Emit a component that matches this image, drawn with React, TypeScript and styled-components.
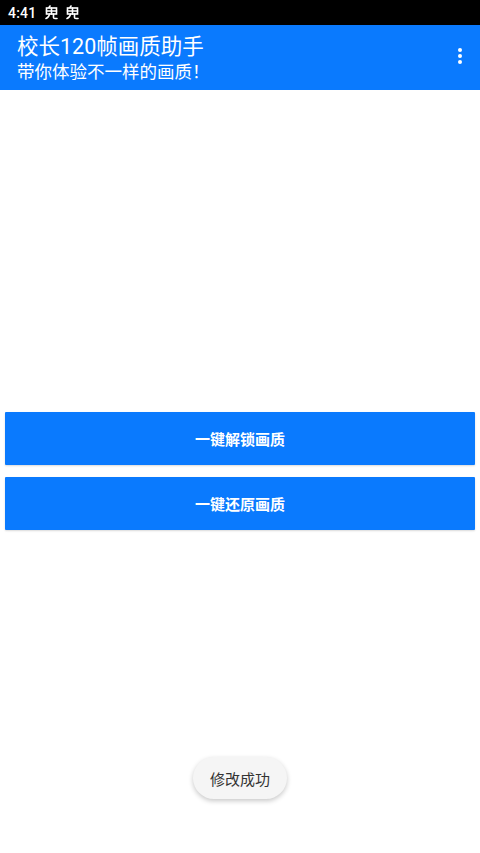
import { FC } from 'react';
import styled, { createGlobalStyle } from 'styled-components';

const GlobalStyle = createGlobalStyle`
  html, body {
    margin: 0;
    padding: 0;
    background: #ffffff;
  }
  body {
    font-family: Roboto, 'Noto Sans CJK SC', sans-serif;
  }
`;

const Screen = styled.div`
  position: relative;
  display: flex;
  flex-direction: column;
  width: 480px;
  height: 853px;
  overflow: hidden;
  background: #ffffff;
`;

const StatusBar = styled.div`
  display: flex;
  align-items: center;
  gap: 8px;
  height: 25px;
  padding: 0 8px;
  background: #000000;
  color: #ffffff;
  font-size: 14px;
  font-weight: 500;
`;

const StatusTime = styled.span`
  margin-right: 1px;
  letter-spacing: 0.2px;
`;

const AppBar = styled.header`
  display: flex;
  align-items: center;
  justify-content: space-between;
  height: 65px;
  padding: 0 16px 0 17px;
  background: #0a7afe;
  color: #ffffff;
`;

const TitleBlock = styled.div`
  display: flex;
  flex-direction: column;
  gap: 3px;
  margin-top: 1px;
`;

const Title = styled.h1`
  margin: 0;
  font-size: 21.5px;
  font-weight: 400;
  line-height: 25px;
`;

const Subtitle = styled.div`
  font-size: 17.5px;
  line-height: 21px;
`;

const MenuButton = styled.div`
  display: flex;
  flex-direction: column;
  gap: 2px;
  padding: 0 2px 4px;
`;

const Dot = styled.span`
  width: 4px;
  height: 4px;
  border-radius: 50%;
  background: #ffffff;
`;

const Content = styled.main`
  display: flex;
  flex-direction: column;
  gap: 12px;
  padding: 322px 5px 0;
`;

const ActionButton = styled.button`
  height: 53px;
  border: none;
  border-radius: 1px;
  background: #0a7afe;
  color: #ffffff;
  font-family: Roboto, 'Noto Sans CJK SC', sans-serif;
  font-size: 15px;
  font-weight: 700;
  box-shadow: 0 1px 2px rgba(0, 0, 0, 0.15);
`;

const Toast = styled.div`
  position: absolute;
  left: 50%;
  top: 757px;
  transform: translateX(-50%);
  height: 42px;
  padding: 0 17px;
  display: flex;
  align-items: center;
  border-radius: 21px;
  background: #f5f5f5;
  color: #333333;
  font-size: 15px;
  box-shadow: 0 2px 5px rgba(0, 0, 0, 0.22);
`;

const NotifIcon: FC = () => (
  <svg width='13' height='15' viewBox='0 0 13 15' fill='none' stroke='#fff' strokeWidth='1.6' strokeLinecap='round'>
    <path d='M5 1 L4 2.5' />
    <rect x='1.5' y='3' width='10' height='6' />
    <path d='M1.5 6 H11.5 M6.5 3 V9' />
    <path d='M4.5 9 Q4 12.5 1 13.5' />
    <path d='M8.5 9 V12.5 Q8.5 13.5 10 13.5 H12' />
  </svg>
);

const App: FC = () => (
  <Screen>
    <GlobalStyle />
    <StatusBar>
      <StatusTime>4:41</StatusTime>
      <NotifIcon />
      <NotifIcon />
    </StatusBar>
    <AppBar>
      <TitleBlock>
        <Title>校长120帧画质助手</Title>
        <Subtitle>带你体验不一样的画质！</Subtitle>
      </TitleBlock>
      <MenuButton>
        <Dot />
        <Dot />
        <Dot />
      </MenuButton>
    </AppBar>
    <Content>
      <ActionButton>一键解锁画质</ActionButton>
      <ActionButton>一键还原画质</ActionButton>
    </Content>
    <Toast>修改成功</Toast>
  </Screen>
);

export default App;
